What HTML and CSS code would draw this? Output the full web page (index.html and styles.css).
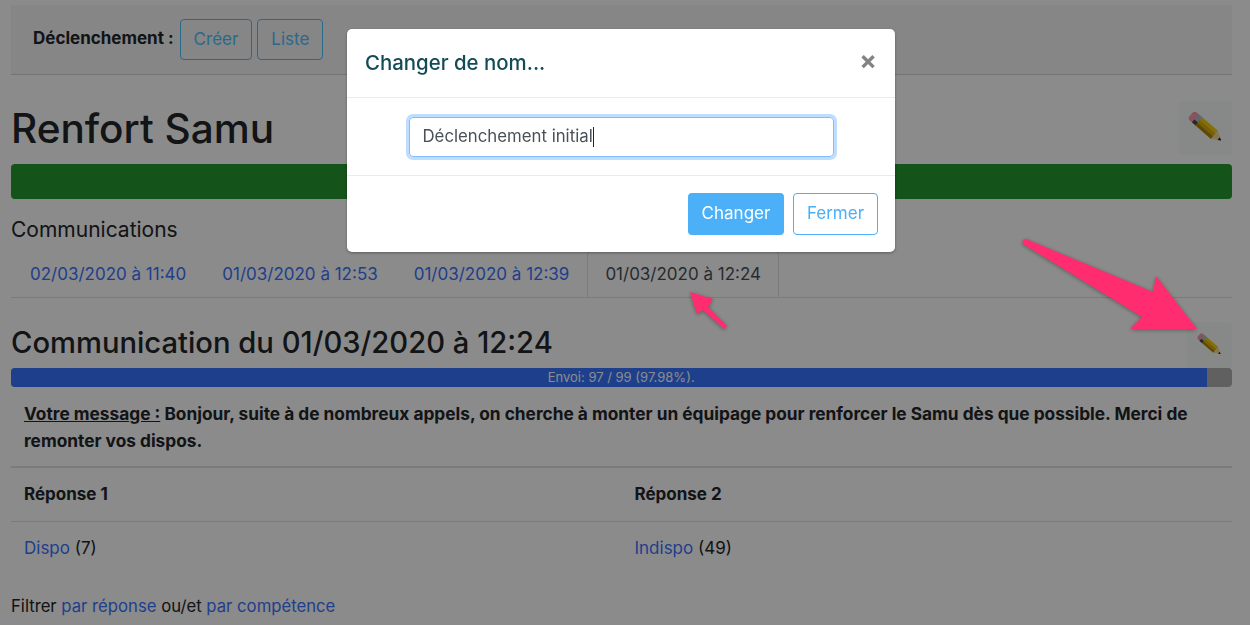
FILE: index.html
```html
<!DOCTYPE html>
<html lang="fr">
<head>
    <meta charset="UTF-8">
    <title>Renfort Samu</title>
    <link rel="stylesheet" href="styles.css">
</head>
<body>
    <svg width="0" height="0" class="defs">
        <symbol id="pencil" viewBox="0 0 36 36">
            <g transform="translate(4 4.5) rotate(41) scale(0.97)">
                <rect x="0" y="-5.5" width="8" height="11" rx="3.5" fill="#f79aa4"/>
                <rect x="6" y="-5.5" width="5" height="11" fill="#a9bcd8"/>
                <rect x="6" y="1.5" width="5" height="4" fill="#4a4a4a"/>
                <rect x="10.5" y="-5.5" width="21.5" height="3.6" fill="#f2cd10"/>
                <rect x="10.5" y="-1.9" width="21.5" height="3.8" fill="#e0ae00"/>
                <rect x="10.5" y="1.9" width="21.5" height="3.6" fill="#b08400"/>
                <path d="M32 -5.5 L41 0 L32 5.5 Z" fill="#f2d9a0"/>
                <path d="M38 -1.8 L41 0 L38 1.8 Z" fill="#111"/>
            </g>
        </symbol>
    </svg>

    <div class="page">
        <div class="topbar">
            <b class="topbar-label">Déclenchement :</b>
            <a class="btn btn-outline">Créer</a>
            <a class="btn btn-outline">Liste</a>
        </div>

        <div class="title-row">
            <h1>Renfort Samu</h1>
            <button class="edit edit-lg"><svg width="36" height="36"><use href="#pencil"/></svg></button>
        </div>
        <div class="green-bar"></div>

        <h5>Communications</h5>
        <ul class="tabs">
            <li><a>02/03/2020 à 11:40</a></li>
            <li><a>01/03/2020 à 12:53</a></li>
            <li><a>01/03/2020 à 12:39</a></li>
            <li class="active"><a>01/03/2020 à 12:24</a></li>
        </ul>

        <div class="title-row title-row-sm">
            <h3>Communication du 01/03/2020 à 12:24</h3>
            <button class="edit edit-sm"><svg width="26" height="26"><use href="#pencil"/></svg></button>
        </div>
        <div class="progress">
            <div class="progress-bar" style="width: 97.98%">Envoi: 97 / 99 (97.98%).</div>
        </div>

        <p class="message"><u>Votre message :</u> Bonjour, suite à de nombreux appels, on cherche à monter un équipage pour renforcer le Samu dès que possible. Merci de remonter vos dispos.</p>

        <table class="answers">
            <tr><th>Réponse 1</th><th>Réponse 2</th></tr>
            <tr><td><a>Dispo</a> (7)</td><td><a>Indispo</a> (49)</td></tr>
        </table>

        <p class="filters">Filtrer <a>par réponse</a> ou/et <a>par compétence</a></p>
    </div>

    <div class="backdrop"></div>

    <div class="modal">
        <div class="modal-header">
            <h4>Changer de nom...</h4>
            <span class="close">&times;</span>
        </div>
        <div class="modal-body">
            <div class="name-input">Déclenchement initial<span class="caret"></span></div>
        </div>
        <div class="modal-footer">
            <a class="btn btn-primary">Changer</a>
            <a class="btn btn-light">Fermer</a>
        </div>
    </div>

    <!-- annotations de la capture -->
    <svg class="arrows" width="1250" height="625" viewBox="0 0 1250 625">
        <path d="M1026 239 L1153 292 L1156 276 L1197 329 L1130 329 L1142 317 L1023 244 Q1021 240 1026 239 Z"/>
        <path d="M690 292 L713 299 L708 307 L727 326 L724 329 L703 310 L697 314 Z"/>
    </svg>
</body>
</html>
```

FILE: styles.css
```css
/* base */
html, body {
    height: 100%;
}

body {
    margin: 0;
    overflow: hidden;
    background: #fff;
    color: #212529;
    font-family: Inter, "Liberation Sans", sans-serif;
    font-size: 17px;
    line-height: 1.5;
}

a {
    color: #3a74ff;
    text-decoration: none;
}

.defs {
    position: absolute;
}

.page {
    padding: 5px 18px 0 11px;
}

/* barre du haut */
.topbar {
    display: flex;
    align-items: center;
    height: 70px;
    box-sizing: border-box;
    padding-left: 22px;
    background: #f6f6f6;
    border-bottom: 1px solid #d4d4d4;
}

.topbar-label {
    margin-right: 6px;
    position: relative;
    top: -1px;
}

.btn {
    display: inline-flex;
    align-items: center;
    justify-content: center;
    box-sizing: border-box;
    height: 41px;
    border-radius: 4px;
    border: 1px solid transparent;
}

.btn-outline {
    padding: 0 13px;
    margin-right: 5px;
    color: #50c0ff;
    border-color: #50c0ff;
}

/* titres */
.title-row {
    display: flex;
    align-items: center;
    justify-content: space-between;
    height: 54px;
    margin-top: 26px;
}

.title-row-sm {
    height: 46px;
    margin-top: 24px;
    align-items: flex-end;
}

h1 {
    margin: 2px 0 0;
    font-size: 40.5px;
    font-weight: 500;
    line-height: 1.2;
}

h3 {
    margin: 0 0 8px;
    font-size: 29.2px;
    font-weight: 500;
    line-height: 1.2;
}

h5 {
    margin: 16px 0 0;
    font-size: 21px;
    font-weight: 400;
    line-height: 30px;
}

.edit {
    display: flex;
    align-items: center;
    justify-content: center;
    padding: 0;
    background: #f8f9fa;
    border: none;
    border-radius: 4px;
}

.edit-lg {
    width: 54px;
    height: 54px;
}

.edit-sm {
    width: 46px;
    height: 46px;
}

.green-bar {
    height: 35px;
    margin-top: 9px;
    background: #269830;
    border-radius: 4px;
}

/* onglets */
.tabs {
    display: flex;
    margin: 6px 0 0;
    padding: 0;
    list-style: none;
    border-bottom: 1px solid #dee2e6;
}

.tabs li {
    padding: 0 17px;
    height: 45px;
    line-height: 45px;
    border: 1px solid transparent;
    border-bottom: 0;
    white-space: nowrap;
}

.tabs li:first-child {
    padding-left: 18px;
}

.tabs .active {
    margin-bottom: -1px;
    background: #fff;
    border-color: #dee2e6;
    border-radius: 4px 4px 0 0;
}

.tabs .active a {
    color: #495057;
}

/* progression */
.progress {
    height: 19px;
    background: #b0b0b0;
    border-radius: 4px;
    overflow: hidden;
}

.progress-bar {
    box-sizing: border-box;
    height: 100%;
    padding-left: 24px;
    background: #3774ff;
    color: #fff;
    font-size: 13px;
    line-height: 19px;
    text-align: center;
}

.message {
    margin: 13px 0 0;
    padding: 0 13px 12px;
    font-size: 17.3px;
    font-weight: 700;
    line-height: 27px;
}

/* reponses */
.answers {
    width: 100%;
    border-collapse: collapse;
    table-layout: fixed;
}

.answers th, .answers td {
    padding: 13px 13px 14px;
    height: 26px;
    line-height: 26px;
    text-align: left;
    border-top: 1px solid #dee2e6;
}

.answers th {
    font-weight: 700;
    border-top-width: 2px;
    border-bottom: 1px solid #dee2e6;
}

.filters {
    margin: 19px 0 0;
    font-size: 16.7px;
}

/* fenetre */
.backdrop {
    position: fixed;
    inset: 0;
    background: rgba(0, 0, 0, 0.455);
}

.modal {
    position: fixed;
    top: 29px;
    left: 347px;
    width: 548px;
    height: 223px;
    background: #fff;
    border-radius: 5px;
    box-shadow: 0 1px 3px rgba(0, 0, 0, 0.35);
    display: flex;
    flex-direction: column;
}

.modal-header {
    display: flex;
    align-items: center;
    justify-content: space-between;
    height: 69px;
    box-sizing: border-box;
    padding: 0 18px;
    border-bottom: 1px solid #e9ecef;
}

h4 {
    margin: 0;
    color: #134b57;
    font-size: 20.4px;
    font-weight: 500;
}

.close {
    margin-bottom: 5px;
    color: #838383;
    font-size: 26px;
    font-weight: 700;
    line-height: 1;
}

.modal-body {
    display: flex;
    justify-content: center;
    align-items: center;
    height: 78px;
    box-sizing: border-box;
    border-bottom: 1px solid #e9ecef;
}

.name-input {
    display: flex;
    align-items: center;
    box-sizing: border-box;
    width: 425px;
    height: 40px;
    padding: 0 13px;
    color: #495057;
    font-size: 16.8px;
    border: 1px solid #80bdff;
    border-radius: 4px;
    box-shadow: 0 0 0 3px rgba(0, 123, 255, 0.25);
}

.caret {
    width: 1px;
    height: 20px;
    background: #222;
}

.modal-footer {
    display: flex;
    justify-content: flex-end;
    align-items: center;
    flex: 1;
    gap: 9px;
    padding: 0 17px;
}

.btn-primary {
    width: 96px;
    height: 42px;
    background: #4bb0f8;
    color: #fff;
}

.btn-light {
    width: 85px;
    height: 42px;
    color: #4bb0f8;
    border-color: #4bb0f8;
}

.arrows {
    position: fixed;
    top: 0;
    left: 0;
    fill: #ff2d6f;
    filter: drop-shadow(0 1px 2px rgba(0, 0, 0, 0.35));
}
```
